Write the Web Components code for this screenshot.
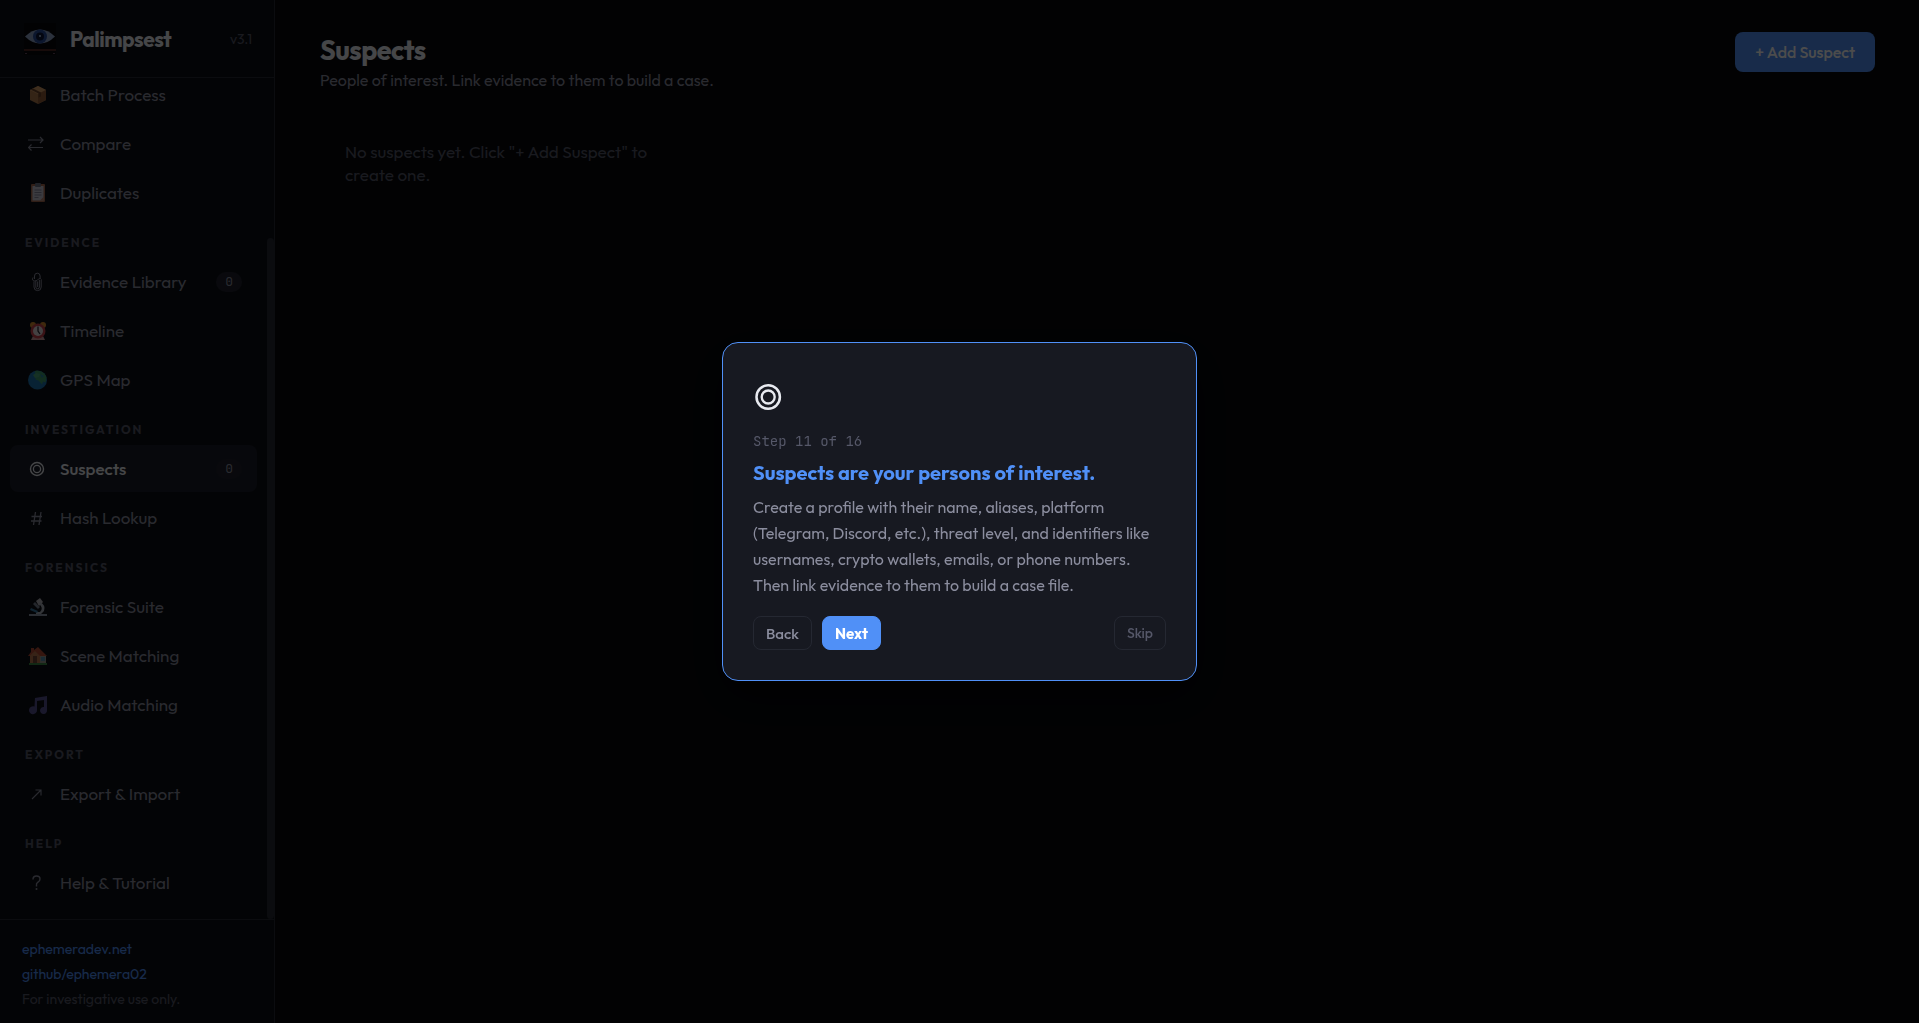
<!DOCTYPE html>
<html lang="en">
<head>
<meta charset="UTF-8">
<title>Palimpsest</title>
<style>
    :root {
        --bg: #07080d;
        --side: #0d1017;
        --card: #171921;
        --line: #252832;
        --text: #e8eaf0;
        --muted: #8b8d9e;
        --dim: #565869;
        --accent: #5090f7;
        --mono: "JetBrains Mono", "Liberation Mono", monospace;
    }
    body {
        margin: 0;
        background: #000;
        color: var(--text);
        font-family: Outfit, Lato, sans-serif;
        font-size: 16px;
    }
</style>
</head>
<body>
<palimpsest-app>
    <side-bar slot="side">
        <nav-item icon="box">Batch Process</nav-item>
        <nav-item icon="swap">Compare</nav-item>
        <nav-item icon="clipboard">Duplicates</nav-item>
        <nav-label>Evidence</nav-label>
        <nav-item icon="clip" count="0">Evidence Library</nav-item>
        <nav-item icon="clock">Timeline</nav-item>
        <nav-item icon="globe">GPS Map</nav-item>
        <nav-label>Investigation</nav-label>
        <nav-item icon="target" count="0" active>Suspects</nav-item>
        <nav-item icon="hash">Hash Lookup</nav-item>
        <nav-label>Forensics</nav-label>
        <nav-item icon="scope">Forensic Suite</nav-item>
        <nav-item icon="house">Scene Matching</nav-item>
        <nav-item icon="music">Audio Matching</nav-item>
        <nav-label>Export</nav-label>
        <nav-item icon="arrow">Export &amp; Import</nav-item>
        <nav-label>Help</nav-label>
        <nav-item icon="help">Help &amp; Tutorial</nav-item>
    </side-bar>
    <suspects-page>
        <span slot="title">Suspects</span>
        <span slot="subtitle">People of interest. Link evidence to them to build a case.</span>
        <span slot="empty">No suspects yet. Click "+ Add Suspect" to create one.</span>
    </suspects-page>
</palimpsest-app>
<tour-step step="11" total="16">
    <span slot="title">Suspects are your persons of interest.</span>
    Create a profile with their name, aliases, platform (Telegram, Discord, etc.), threat level, and identifiers like usernames, crypto wallets, emails, or phone numbers. Then link evidence to them to build a case file.
</tour-step>

<script>
// Icon drawings, all on a 20x20 grid
const ICONS = {
    box: `<path d="M10 1l8 4v10l-8 4-8-4V5z" fill="#b07a4c"/><path d="M10 1l8 4-8 4-8-4z" fill="#d19a66"/><path d="M10 9l8-4v10l-8 4z" fill="#8f5d38"/><path d="M5 3.5l8 4v4l-2.500 1V8.600l-8-4z" fill="#6d452b"/>`,
    swap: `<path d="M0 6h14.500M12 3l3 3-3 3M15 13.500H0.500M3.500 10.500l-3 3 3 3" fill="none" stroke="currentColor" stroke-width="1.200"/>`,
    clipboard: `<rect x="3" y="1" width="14" height="18" rx="1" fill="#a5684f"/><rect x="4.500" y="3" width="11" height="14.500" fill="#c5c5d3"/><rect x="7" y="0" width="6" height="4" rx="1" fill="#6d7284"/><path d="M6.500 7h7M6.500 9.500h7M6.500 12h7M6.500 14.500h4" stroke="#85879b"/><path d="M15.500 14v3.500H12z" fill="#bd826c"/>`,
    clip: `<path d="M6.500 7V4a2.800 2.800 0 0 1 5.600 0v2M6 9.500V15a3.600 3.600 0 0 0 7.200 0V8M7.800 9v6a1.800 1.800 0 0 0 3.600 0V8M9.600 15V9.500" fill="none" stroke="currentColor" stroke-width="1"/><path d="M5 5.500q-1.500 3 1.500 3.500 3 0 4-2 2-1.500 3 .5" fill="none" stroke="currentColor" stroke-width="1"/>`,
    clock: `<circle cx="5" cy="4" r="3" fill="#d38b2e"/><circle cx="15" cy="4" r="3" fill="#d38b2e"/><path d="M5 15h10l2 4H3z" fill="#cf9b9e"/><circle cx="10" cy="10" r="7.500" fill="#c7404b"/><circle cx="10" cy="10" r="5" fill="#e3dade"/><path d="M10 5.500V10l2 3" fill="none" stroke="#2b2a35" stroke-width="1.300"/>`,
    globe: `<circle cx="9.500" cy="10" r="9.500" fill="#1d72ad"/><path d="M7 1c6-1 10 2 11.500 6.500l-1 5-2.500-1-1 3-3.500-4-3-1 0-3z" fill="#3f9a6c"/><path d="M8 3l4 1-1 3-4 1-2-3z" fill="#4aa67c"/><path d="M12 4l4 2-2 2z" fill="#2682a8"/>`,
    target: `<circle cx="9" cy="10" r="6.500" fill="none" stroke="currentColor" stroke-width="1.400"/><circle cx="9" cy="10" r="3.600" fill="none" stroke="currentColor" stroke-width="1.300"/>`,
    hash: `<path d="M7.500 4l-2 13M13 4l-2 13M3.500 8.500h10.500M3 13h10.500" fill="none" stroke="currentColor" stroke-width="1.300"/>`,
    scope: `<path d="M1 17h18v2H1z" fill="#8d96a7"/><path d="M8 4l4-3 3 4-4 4z" fill="#b5b5bd"/><path d="M7 5l5 5-2 2-5-5z" fill="#777f90"/><path d="M12 5q6 3 4 9l-3 3H8v-2h4q4-4-1-8z" fill="#a9afb9"/><path d="M3 11l7 3-1 2-7-3z" fill="#37759d"/>`,
    house: `<path d="M0 10L3 6V2h3v2l4-3 9 9z" fill="#b34a34"/><path d="M2 9.500L7 5l5 5v8H2z" fill="#ba774e"/><path d="M12 10h6v8h-6z" fill="#9b9990"/><path d="M5 10h4v8H5z" fill="#704433"/><path d="M13 11h4v4h-4z" fill="#568caa"/><path d="M1 17h18v2H1z" fill="#398844"/>`,
    music: `<path d="M7 3l12-2v14a3.500 3.500 0 1 1-3-3V5L9 6v9a4 4 0 1 1-2.500-3.500z" fill="#565092"/>`,
    arrow: `<path d="M4 15l8.500-8.500M7.500 6h5.500v5.500" fill="none" stroke="currentColor" stroke-width="1.100"/>`,
    help: `<path d="M5 6.500q0-3.500 3.500-3.500t3.500 3q0 2-2 3.200T8.500 12v1.500" fill="none" stroke="currentColor" stroke-width="1.400"/><circle cx="8.500" cy="16" r="1" fill="currentColor"/>`
};

function icon(name) {
    return `<svg viewBox="0 0 20 20" aria-hidden="true">${ICONS[name] || ''}</svg>`;
}

// Page shell: sidebar on the left, current page on the right
class PalimpsestApp extends HTMLElement {
    constructor() {
        super();
        this.attachShadow({ mode: 'open' }).innerHTML = `
            <style>
                :host { display: flex; height: 100vh; background: var(--bg); }
                main { flex: 1; min-width: 0; }
            </style>
            <slot name="side"></slot>
            <main><slot></slot></main>
        `;
    }
}
customElements.define('palimpsest-app', PalimpsestApp);

class SideBar extends HTMLElement {
    constructor() {
        super();
        this.attachShadow({ mode: 'open' }).innerHTML = `
            <style>
                :host {
                    display: flex;
                    flex-direction: column;
                    flex: none;
                    width: 275px;
                    box-sizing: border-box;
                    background: var(--side);
                    border-right: 1px solid var(--line);
                }
                header {
                    display: flex;
                    align-items: center;
                    gap: 14px;
                    height: 77px;
                    padding: 0 22px 0 24px;
                    border-bottom: 1px solid var(--line);
                }
                header svg { width: 32px; height: 32px; }
                .name { flex: 1; font-size: 21px; font-weight: 700; line-height: 28px; letter-spacing: -0.5px; }
                .version { font-size: 14px; color: var(--dim); }
                nav { flex: 1; min-height: 0; display: flex; }
                .list {
                    flex: 1;
                    display: flex;
                    flex-direction: column;
                    justify-content: flex-end;
                    overflow: hidden;
                    padding: 0 10px 11px;
                }
                .thumb {
                    align-self: flex-end;
                    width: 7px;
                    height: 81%;
                    border-radius: 4px;
                    background: var(--line);
                }
                footer {
                    display: flex;
                    flex-direction: column;
                    align-items: flex-start;
                    padding: 17px 22px 11px;
                    border-top: 1px solid var(--line);
                    font-size: 14px;
                    line-height: 25px;
                    color: var(--dim);
                }
                a { color: var(--accent); text-decoration: none; }
            </style>
            <header>
                <svg viewBox="0 0 32 32" aria-hidden="true">
                    <rect width="32" height="32" fill="#07080c"/>
                    <path d="M1 13.500Q8 6.500 16 6.500t15 7q-7 7-15 7t-15-7z" fill="#91a5ca"/>
                    <circle cx="16" cy="13.500" r="7" fill="#284d9c"/>
                    <circle cx="16" cy="13.500" r="4" fill="#0b1437"/>
                    <circle cx="16" cy="13" r="1" fill="#b6cce8"/>
                    <path d="M0 27h32" stroke="#954439"/>
                    <path d="M1 30.500h2M29 30.500h2" stroke="#61475e"/>
                </svg>
                <span class="name">Palimpsest</span>
                <span class="version">v3.1</span>
            </header>
            <nav>
                <div class="list"><slot></slot></div>
                <div class="thumb"></div>
            </nav>
            <footer>
                <a href="#site">ephemeradev.net</a>
                <a href="#github">github/ephemera02</a>
                <span>For investigative use only.</span>
            </footer>
        `;
    }
}
customElements.define('side-bar', SideBar);

class NavLabel extends HTMLElement {
    constructor() {
        super();
        this.attachShadow({ mode: 'open' }).innerHTML = `
            <style>
                :host {
                    display: block;
                    flex: none;
                    padding: 17px 15px 7px;
                    font-size: 12px;
                    font-weight: 700;
                    line-height: 16px;
                    letter-spacing: 2px;
                    text-transform: uppercase;
                    color: var(--dim);
                }
            </style>
            <slot></slot>
        `;
    }
}
customElements.define('nav-label', NavLabel);

// <nav-item icon="..." count="0" active>
class NavItem extends HTMLElement {
    constructor() {
        super();
        this.attachShadow({ mode: 'open' });
    }

    connectedCallback() {
        const count = this.getAttribute('count');
        this.shadowRoot.innerHTML = `
            <style>
                :host { display: block; flex: none; margin-bottom: 2px; }
                button {
                    display: flex;
                    align-items: center;
                    gap: 12px;
                    width: 100%;
                    height: 47px;
                    padding: 0 15px 0 18px;
                    border: 0;
                    border-radius: 8px;
                    background: none;
                    color: var(--muted);
                    font: inherit;
                    font-size: 17px;
                    text-align: left;
                }
                :host([active]) button { background: #1a1d29; color: var(--text); font-weight: 500; }
                svg { flex: none; width: 20px; height: 20px; }
                .label { flex: 1; }
                .count {
                    padding: 0 9px;
                    border-radius: 10px;
                    background: #1e212c;
                    color: var(--muted);
                    font: 13px/20px var(--mono);
                }
            </style>
            <button type="button">
                ${icon(this.getAttribute('icon'))}
                <span class="label"><slot></slot></span>
                ${count === null ? '' : `<span class="count">${count}</span>`}
            </button>
        `;
    }
}
customElements.define('nav-item', NavItem);

class SuspectsPage extends HTMLElement {
    constructor() {
        super();
        this.attachShadow({ mode: 'open' }).innerHTML = `
            <style>
                :host { display: block; padding: 32px 44px 32px 45px; }
                header { display: flex; justify-content: space-between; align-items: flex-start; }
                h1 { margin: 0; font-size: 27px; line-height: 36px; font-weight: 700; letter-spacing: -0.5px; }
                p { margin: 0; font-size: 16px; line-height: 24px; color: var(--muted); }
                button {
                    height: 40px;
                    padding: 0 20px;
                    border: 0;
                    border-radius: 8px;
                    background: var(--accent);
                    color: #fff;
                    font: inherit;
                    font-weight: 500;
                }
                .grid {
                    display: grid;
                    grid-template-columns: repeat(auto-fill, minmax(350px, 1fr));
                    gap: 16px;
                    margin-top: 24px;
                }
                .empty { padding: 24px 25px; font-size: 17px; line-height: 23px; color: var(--dim); }
            </style>
            <header>
                <div>
                    <h1><slot name="title"></slot></h1>
                    <p><slot name="subtitle"></slot></p>
                </div>
                <button type="button">+ Add Suspect</button>
            </header>
            <div class="grid"><div class="empty"><slot name="empty"></slot></div></div>
        `;
    }
}
customElements.define('suspects-page', SuspectsPage);

// Tutorial dialog that dims the page behind it
class TourStep extends HTMLElement {
    constructor() {
        super();
        this.attachShadow({ mode: 'open' });
    }

    connectedCallback() {
        this.shadowRoot.innerHTML = `
            <style>
                :host {
                    position: fixed;
                    inset: 0;
                    display: flex;
                    align-items: center;
                    justify-content: center;
                    background: rgba(0, 0, 0, .7);
                }
                section {
                    box-sizing: border-box;
                    width: 475px;
                    padding: 30px;
                    border: 1px solid var(--accent);
                    border-radius: 16px;
                    background: var(--card);
                    box-shadow: 0 16px 48px rgba(0, 0, 0, .5);
                }
                svg { display: block; width: 36px; height: 36px; margin: 6px 0 17px -1px; }
                .step { font: 14px/18px var(--mono); color: var(--dim); }
                h2 { margin: 10px 0 8px; font-size: 20px; line-height: 26px; font-weight: 700; color: var(--accent); }
                p { margin: 0 0 18px; font-size: 16px; line-height: 26px; color: var(--muted); }
                .actions { display: flex; gap: 10px; }
                button {
                    height: 34px;
                    padding: 0 12px;
                    border: 1px solid var(--line);
                    border-radius: 8px;
                    background: none;
                    color: var(--muted);
                    font: inherit;
                    font-size: 15px;
                    font-weight: 500;
                }
                .next { border-color: var(--accent); background: var(--accent); color: #fff; font-weight: 700; }
                .skip { margin-left: auto; color: var(--dim); font-size: 14px; }
            </style>
            <section role="dialog" aria-labelledby="title">
                ${icon('target')}
                <div class="step">Step ${this.getAttribute('step')} of ${this.getAttribute('total')}</div>
                <h2 id="title"><slot name="title"></slot></h2>
                <p><slot></slot></p>
                <div class="actions">
                    <button type="button">Back</button>
                    <button type="button" class="next">Next</button>
                    <button type="button" class="skip">Skip</button>
                </div>
            </section>
        `;
    }
}
customElements.define('tour-step', TourStep);
</script>
</body>
</html>
